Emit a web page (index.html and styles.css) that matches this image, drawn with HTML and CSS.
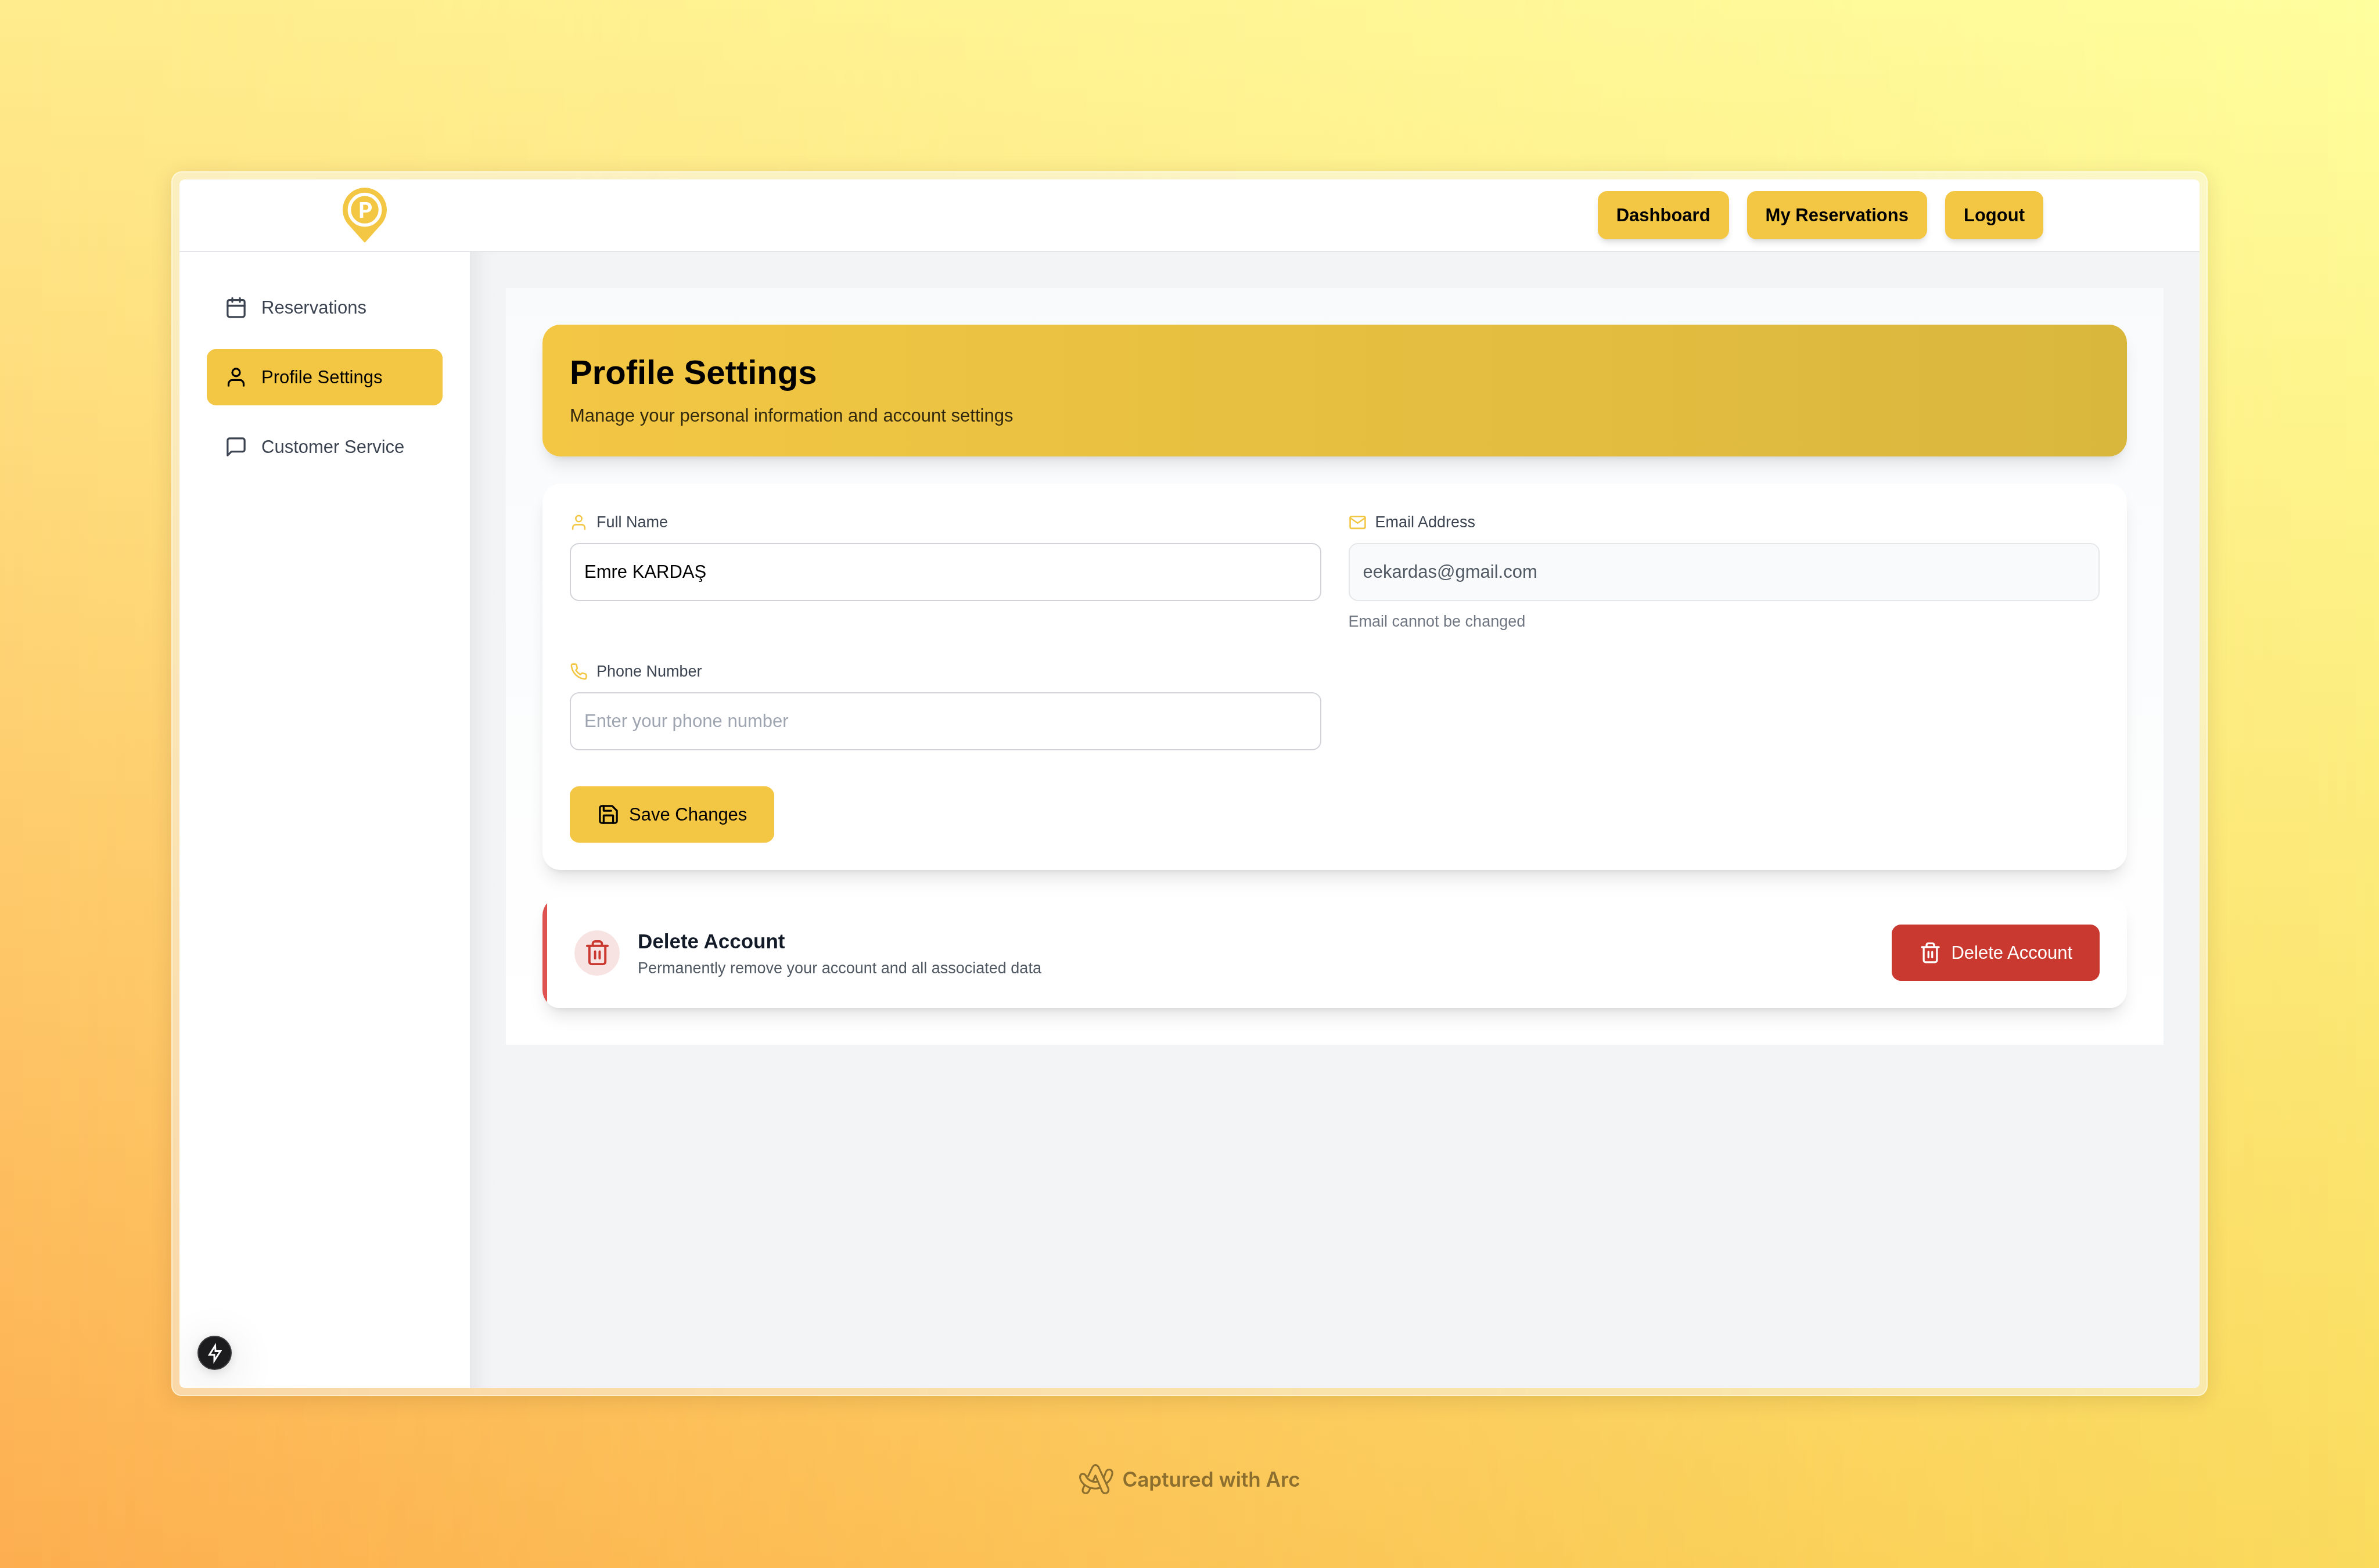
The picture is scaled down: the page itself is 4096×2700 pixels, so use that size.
FILE: index.html
```html
<!DOCTYPE html>
<html lang="en">
<head>
  <meta charset="utf-8">
  <meta name="viewport" content="width=device-width, initial-scale=1">
  <title>Profile Settings</title>
  <link rel="stylesheet" href="styles.css">
</head>
<body>
  <div class="frame">
    <div class="window">
      <header class="topbar">
        <div class="topbar-inner">
          <a class="logo" href="#" aria-label="Home">
            <svg class="logo-mark" viewBox="0 0 212 264" aria-hidden="true">
              <path fill="#f3c744" d="M106 0A106 106 0 0 1 188 173L110 260Q106 266 102 260L24 173A106 106 0 0 1 106 0Z"/>
              <circle cx="106" cy="106" r="74" fill="none" stroke="#fff" stroke-width="16"/>
              <text class="logo-letter" x="110" y="144" text-anchor="middle">P</text>
            </svg>
          </a>
          <nav class="topbar-actions">
            <button class="pill" type="button">Dashboard</button>
            <button class="pill" type="button">My Reservations</button>
            <button class="pill" type="button">Logout</button>
          </nav>
        </div>
      </header>

      <div class="body">
        <aside class="sidebar">
          <a class="nav-item" href="#">
            <svg class="icon" viewBox="0 0 24 24" aria-hidden="true"><rect x="3" y="4" width="18" height="18" rx="2" ry="2"/><path d="M16 2v4M8 2v4M3 10h18"/></svg>
            <span>Reservations</span>
          </a>
          <a class="nav-item is-active" href="#" aria-current="page">
            <svg class="icon" viewBox="0 0 24 24" aria-hidden="true"><path d="M20 21v-2a4 4 0 0 0-4-4H8a4 4 0 0 0-4 4v2"/><circle cx="12" cy="7" r="4"/></svg>
            <span>Profile Settings</span>
          </a>
          <a class="nav-item" href="#">
            <svg class="icon" viewBox="0 0 24 24" aria-hidden="true"><path d="M21 15a2 2 0 0 1-2 2H7l-4 4V5a2 2 0 0 1 2-2h14a2 2 0 0 1 2 2z"/></svg>
            <span>Customer Service</span>
          </a>
        </aside>

        <main class="main">
          <div class="panel">
            <section class="card hero">
              <h1 class="hero-title">Profile Settings</h1>
              <p class="hero-text">Manage your personal information and account settings</p>
            </section>

            <form class="card form">
              <div class="fields">
                <div class="field">
                  <label class="label" for="full-name">
                    <svg class="icon icon-small" viewBox="0 0 24 24" aria-hidden="true"><path d="M20 21v-2a4 4 0 0 0-4-4H8a4 4 0 0 0-4 4v2"/><circle cx="12" cy="7" r="4"/></svg>
                    Full Name
                  </label>
                  <input class="input" id="full-name" type="text" value="Emre KARDAŞ">
                </div>
                <div class="field">
                  <label class="label" for="email">
                    <svg class="icon icon-small" viewBox="0 0 24 24" aria-hidden="true"><path d="M4 4h16c1.1 0 2 .9 2 2v12c0 1.1-.9 2-2 2H4c-1.1 0-2-.9-2-2V6c0-1.1.9-2 2-2z"/><path d="M22 6l-10 7L2 6"/></svg>
                    Email Address
                  </label>
                  <input class="input" id="email" type="email" value="eekardas@gmail.com" aria-describedby="email-hint" disabled>
                  <p class="hint" id="email-hint">Email cannot be changed</p>
                </div>
                <div class="field">
                  <label class="label" for="phone">
                    <svg class="icon icon-small" viewBox="0 0 24 24" aria-hidden="true"><path d="M22 16.92v3a2 2 0 0 1-2.18 2 19.79 19.79 0 0 1-8.63-3.07 19.5 19.5 0 0 1-6-6 19.79 19.79 0 0 1-3.07-8.67A2 2 0 0 1 4.11 2h3a2 2 0 0 1 2 1.72 12.84 12.84 0 0 0 .7 2.81 2 2 0 0 1-.45 2.11L8.09 9.91a16 16 0 0 0 6 6l1.27-1.27a2 2 0 0 1 2.11-.45 12.84 12.84 0 0 0 2.81.7A2 2 0 0 1 22 16.92z"/></svg>
                    Phone Number
                  </label>
                  <input class="input" id="phone" type="tel" placeholder="Enter your phone number">
                </div>
              </div>
              <button class="button" type="button">
                <svg class="icon" viewBox="0 0 24 24" aria-hidden="true"><path d="M19 21H5a2 2 0 0 1-2-2V5a2 2 0 0 1 2-2h11l5 5v11a2 2 0 0 1-2 2z"/><path d="M17 21v-8H7v8M7 3v5h8"/></svg>
                Save Changes
              </button>
            </form>

            <section class="card danger">
              <div class="danger-info">
                <span class="danger-badge">
                  <svg class="icon icon-large" viewBox="0 0 24 24" aria-hidden="true"><path d="M3 6h18M19 6v14a2 2 0 0 1-2 2H7a2 2 0 0 1-2-2V6m3 0V4a2 2 0 0 1 2-2h4a2 2 0 0 1 2 2v2M10 11v6M14 11v6"/></svg>
                </span>
                <div>
                  <h2 class="danger-title">Delete Account</h2>
                  <p class="danger-text">Permanently remove your account and all associated data</p>
                </div>
              </div>
              <button class="button button-danger" type="button">
                <svg class="icon" viewBox="0 0 24 24" aria-hidden="true"><path d="M3 6h18M19 6v14a2 2 0 0 1-2 2H7a2 2 0 0 1-2-2V6m3 0V4a2 2 0 0 1 2-2h4a2 2 0 0 1 2 2v2M10 11v6M14 11v6"/></svg>
                Delete Account
              </button>
            </section>
          </div>
        </main>
      </div>

      <button class="dev-badge" type="button" aria-label="Developer tools">
        <svg class="dev-bolt" viewBox="0 0 24 32" aria-hidden="true"><path d="M12.500 3L2.500 19H11V29L21.500 12.500H13Z"/></svg>
      </button>
    </div>
  </div>

  <footer class="credit">
    <svg class="credit-mark" viewBox="134 120 214 190" aria-hidden="true">
      <path d="M192 196L219 140Q236 118 254 140L313 268Q320 290 304 299Q285 306 275 286L236 193L222 224"/>
      <path d="M264 267Q250 272 235 272C195 272 150 245 143 208Q141 186 158 183Q170 182 177 193C185 215 210 232 237 232Q245 231 250 228"/>
      <path d="M168 256L160 274Q154 292 170 299Q186 304 195 290L206 268"/>
      <path d="M286 208L299 172Q306 155 323 157Q340 162 338 182C334 205 320 228 303 240"/>
    </svg>
    <span>Captured with Arc</span>
  </footer>
</body>
</html>
```
FILE: styles.css
```css
:root {
  --yellow: #f3c744;
  --red: #c93930;
  --slate: #3d4451;
  --gap: 47px;
  --text: 31px;
  --text-small: 27px;
  --line: 47px;
  --line-small: 39px;
}

*,
*::before {
  box-sizing: border-box;
}

body {
  margin: 0;
  min-height: 100vh;
  display: flex;
  flex-direction: column;
  padding: 295px 295px 0;
  font-family: "Liberation Sans", Arial, sans-serif;
  font-size: var(--text);
  line-height: var(--line);
  background: linear-gradient(to top, #fadb5d, #fffe9e);
}

/* Warmer backdrop that fades out towards the right edge */
body::before {
  content: "";
  position: fixed;
  inset: 0;
  z-index: -1;
  background: linear-gradient(to top, #fdae50, #ffec8c);
  -webkit-mask-image: linear-gradient(to right, #000, transparent);
  mask-image: linear-gradient(to right, #000, transparent);
}

h1,
h2,
p {
  margin: 0;
}

button,
input {
  font: inherit;
}

button {
  border: 0;
  cursor: pointer;
}

.frame {
  flex: 1;
  display: flex;
  padding: 12px;
  border: 2px solid rgba(255, 255, 235, 0.5);
  border-radius: 18px;
  background: rgba(247, 247, 247, 0.5);
  box-shadow: 0 6px 36px rgba(60, 40, 0, 0.13);
}

.window {
  position: relative;
  flex: 1;
  display: flex;
  flex-direction: column;
  overflow: hidden;
  border-radius: 9px;
  background: #fff;
}

.topbar {
  border-bottom: 2px solid #e4e5e8;
}

.topbar-inner {
  display: flex;
  align-items: center;
  justify-content: space-between;
  max-width: 3002px;
  min-height: 123px;
  margin: 0 auto;
  padding: 0 31px;
}

.logo {
  display: flex;
  padding: 0 12px;
}

.logo-mark {
  width: 76px;
  height: 95px;
}

.logo-letter {
  font: 700 104px Inter, "Liberation Sans", sans-serif;
  fill: #fff;
}

.topbar-actions {
  display: flex;
  gap: 31px;
}

.pill {
  padding: 18px 32px;
  border-radius: 16px;
  background: var(--yellow);
  color: #000;
  font-weight: 700;
  box-shadow: 0 8px 12px -2px rgba(0, 0, 0, 0.1), 0 4px 8px -4px rgba(0, 0, 0, 0.1);
}

.body {
  flex: 1;
  display: flex;
}

.sidebar {
  flex: none;
  display: flex;
  flex-direction: column;
  gap: 23px;
  width: 500px;
  padding: 47px;
}

.nav-item {
  display: flex;
  align-items: center;
  gap: 24px;
  padding: 25px 31px;
  border-radius: 16px;
  color: var(--slate);
  text-decoration: none;
}

.nav-item.is-active {
  background: var(--yellow);
  color: #000;
}

.icon {
  flex: none;
  width: 39px;
  height: 39px;
  fill: none;
  stroke: currentColor;
  stroke-width: 2;
  stroke-linecap: round;
  stroke-linejoin: round;
}

.icon-small {
  width: 31px;
  height: 31px;
  color: var(--yellow);
}

.icon-large {
  width: 47px;
  height: 47px;
}

.main {
  flex: 1;
  padding: 62px;
  background: linear-gradient(to right, #e7e8ea, #ecedef 14px, #f0f2f4 28px, #f2f4f6 46px);
}

.panel {
  display: flex;
  flex-direction: column;
  gap: var(--gap);
  padding: 63px;
  background: linear-gradient(to bottom, #f9fafc, #fff);
}

.card {
  padding: 47px;
  border-radius: 31px;
  background: #fff;
  box-shadow: 0 20px 29px -6px rgba(0, 0, 0, 0.1), 0 8px 12px -8px rgba(0, 0, 0, 0.1);
}

.hero {
  display: flex;
  flex-direction: column;
  gap: 16px;
  background: linear-gradient(to right, #f3c744, #d9b73d);
}

.hero-title {
  font-size: 58px;
  line-height: 70px;
  color: #000;
}

.hero-text {
  color: rgba(0, 0, 0, 0.8);
}

.form {
  display: flex;
  flex-direction: column;
  align-items: flex-start;
  gap: 62px;
}

.fields {
  display: grid;
  grid-template-columns: 1fr 1fr;
  gap: var(--gap);
  width: 100%;
}

.field {
  display: flex;
  flex-direction: column;
  gap: 16px;
}

.label {
  display: flex;
  align-items: center;
  gap: 15px;
  font-size: var(--text-small);
  line-height: var(--line-small);
  color: var(--slate);
}

.input {
  width: 100%;
  height: 100px;
  padding: 0 23px;
  border: 2px solid #d2d3d8;
  border-radius: 16px;
  background: #fff;
  color: #000;
}

.input::placeholder {
  color: #9ea5b0;
  opacity: 1;
}

.input:disabled {
  border-color: #e5e7e9;
  background: #f9fafc;
  color: #505862;
}

.hint {
  font-size: var(--text-small);
  line-height: var(--line-small);
  color: #6f7681;
}

.button {
  display: flex;
  align-items: center;
  gap: 16px;
  padding: 25px 47px;
  border-radius: 16px;
  background: var(--yellow);
  color: #000;
}

.button-danger {
  background: var(--red);
  color: #fff;
}

/* The red edge is a straight stripe, cut off by the rounded corners */
.danger {
  display: flex;
  align-items: center;
  justify-content: space-between;
  padding-left: 55px;
  background: linear-gradient(to right, #df524d 8px, #fff 8px);
}

.danger-info {
  display: flex;
  align-items: center;
  gap: 31px;
}

.danger-badge {
  display: flex;
  align-items: center;
  justify-content: center;
  width: 78px;
  height: 78px;
  border-radius: 50%;
  background: #f8e3e3;
  color: var(--red);
}

.danger-title {
  font-size: 35px;
  line-height: 54px;
  color: #131a28;
}

.danger-text {
  font-size: var(--text-small);
  line-height: var(--line-small);
  color: #505862;
}

/* Floating badge in the corner of the window */
.dev-badge {
  position: absolute;
  left: 31px;
  bottom: 31px;
  display: flex;
  align-items: center;
  justify-content: center;
  width: 59px;
  height: 59px;
  padding: 0;
  border: 2px solid #3c3c3e;
  border-radius: 50%;
  background: #1c1c1e;
  box-shadow: 0 4px 16px rgba(0, 0, 0, 0.12), 0 16px 70px 20px rgba(0, 0, 0, 0.06);
}

.dev-bolt {
  width: 24px;
  height: 32px;
  overflow: visible;
  fill: none;
  stroke: #fff;
  stroke-width: 3;
}

.credit {
  display: flex;
  align-items: center;
  justify-content: center;
  gap: 14px;
  height: 296px;
  padding-bottom: 10px;
  font-family: Inter, "Liberation Sans", sans-serif;
  font-size: 35px;
  font-weight: 600;
  color: #8c6f2e;
}

.credit-mark {
  width: 61px;
  height: 54px;
  fill: none;
  stroke: currentColor;
  stroke-width: 11;
  stroke-linecap: round;
  stroke-linejoin: round;
}
```
